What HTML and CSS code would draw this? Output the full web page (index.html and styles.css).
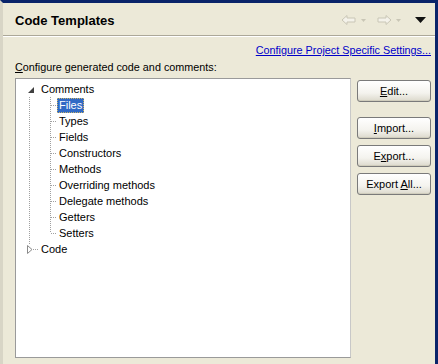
FILE: index.html
```html
<!DOCTYPE html>
<html>
<head>
<meta charset="utf-8">
<link rel="stylesheet" href="styles.css">
</head>
<body>
<div class="window">
  <div class="header">
    <span class="title">Code Templates</span>
    <div class="nav">
      <svg class="navicon" width="16" height="12" viewBox="0 0 16 12"><path d="M1 6 L6 1.5 V4 H14 V8 H6 V10.5 Z" fill="#f4f2ea" stroke="#c9c6b6" stroke-width="1"/></svg>
      <svg class="drop" width="5" height="3" viewBox="0 0 5 3"><path d="M0 0 H5 L2.5 3 Z" fill="#c9c6b6"/></svg>
      <svg class="navicon" width="16" height="12" viewBox="0 0 16 12"><path d="M15 6 L10 1.5 V4 H2 V8 H10 V10.5 Z" fill="#f4f2ea" stroke="#c9c6b6" stroke-width="1"/></svg>
      <svg class="drop" width="5" height="3" viewBox="0 0 5 3"><path d="M0 0 H5 L2.5 3 Z" fill="#c9c6b6"/></svg>
      <svg class="menu" width="11" height="7" viewBox="0 0 11 7"><path d="M0 0 H11 L5.5 6 Z" fill="#111"/></svg>
    </div>
  </div>
  <div class="body">
    <div class="linkrow"><a class="link" href="#">Configure Project Specific Settings...</a></div>
    <div class="label"><u>C</u>onfigure generated code and comments:</div>
    <div class="main">
      <div class="tree">
        <div class="row">
          <span class="cell a exp-open"><svg width="6" height="6" viewBox="0 0 6 6"><path d="M6 0 V6 H0 Z" fill="#404040"/></svg></span>
          <span class="text">Comments</span>
        </div>
        <div class="row"><span class="cell a vl"></span><span class="cell b vl hl"></span><span class="text sel">Files</span></div>
        <div class="row"><span class="cell a vl"></span><span class="cell b vl hl"></span><span class="text">Types</span></div>
        <div class="row"><span class="cell a vl"></span><span class="cell b vl hl"></span><span class="text">Fields</span></div>
        <div class="row"><span class="cell a vl"></span><span class="cell b vl hl"></span><span class="text">Constructors</span></div>
        <div class="row"><span class="cell a vl"></span><span class="cell b vl hl"></span><span class="text">Methods</span></div>
        <div class="row"><span class="cell a vl"></span><span class="cell b vl hl"></span><span class="text">Overriding methods</span></div>
        <div class="row"><span class="cell a vl"></span><span class="cell b vl hl"></span><span class="text">Delegate methods</span></div>
        <div class="row"><span class="cell a vl"></span><span class="cell b vl hl"></span><span class="text">Getters</span></div>
        <div class="row"><span class="cell a vl"></span><span class="cell b vlhalf hl"></span><span class="text">Setters</span></div>
        <div class="row">
          <span class="cell a vltop hla exp-closed"><svg width="6" height="9" viewBox="0 0 6 9"><path d="M0.5 0.5 V8.5 L5 4.5 Z" fill="#fff" stroke="#8a8a8a" stroke-width="1"/></svg></span>
          <span class="text">Code</span>
        </div>
      </div>
      <div class="buttons">
        <button class="btn"><u>E</u>dit...</button>
        <button class="btn gap"><u>I</u>mport...</button>
        <button class="btn">E<u>x</u>port...</button>
        <button class="btn">Export <u>A</u>ll...</button>
      </div>
    </div>
  </div>
</div>
</body>
</html>
```

FILE: styles.css
```css
html, body {
  margin: 0;
  padding: 0;
  background: #ece9d8;
}
body {
  font-family: "Liberation Sans", Arial, sans-serif;
  font-size: 11px;
  color: #000;
}
.window {
  width: 438px;
  height: 364px;
  box-sizing: border-box;
  border-top: 3px solid #0a246a;
  border-left: 3px solid #d8d5c6;
  border-right: 3px solid #0a246a;
  background: #ece9d8;
  display: flex;
  flex-direction: column;
}
.header {
  height: 32px;
  flex: none;
  display: flex;
  align-items: center;
  justify-content: space-between;
  padding: 0 9px 0 12px;
  border-bottom: 1px solid #aca899;
  box-shadow: 0 1px 0 #fff;
}
.title {
  font-weight: bold;
  font-size: 13px;
  font-family: "Liberation Sans", Arial, sans-serif;
  margin-top: 2px;
}
.nav {
  display: flex;
  align-items: center;
  gap: 4px;
  margin-top: 2px;
}
.drop { margin-right: 6px; }
.menu { margin-left: 4px; }
.body {
  flex: 1;
  display: flex;
  flex-direction: column;
  padding: 6px 4px 6px 12px;
}
.linkrow {
  display: flex;
  justify-content: flex-end;
  height: 16px;
  align-items: center;
}
.link {
  color: #0000c8;
  text-decoration: underline;
  font-size: 10.8px;
}
.label {
  height: 16px;
  display: flex;
  align-items: center;
  margin-top: 1px;
  font-size: 10.8px;
}
.label u { text-decoration: underline; }
.main {
  flex: 1;
  display: flex;
  gap: 6px;
  margin-top: 3px;
}
.tree {
  width: 336px;
  height: 280px;
  box-sizing: border-box;
  background: #fff;
  border: 1px solid #9a9a9a;
  border-right-color: #c8c8c8;
  padding: 2px 0 0 4px;
}
.row {
  height: 16px;
  display: flex;
  align-items: center;
}
.cell {
  flex: none;
  height: 16px;
  display: flex;
  align-items: center;
  background-repeat: no-repeat;
}
.cell.a { width: 19px; }
.cell.b { width: 18px; }
.exp-open { padding-left: 8px; box-sizing: border-box; padding-top: 1px; }
.exp-closed { padding-left: 7px; box-sizing: border-box; }
.cell.a.vl {
  background-image: repeating-linear-gradient(to bottom, #a0a0a0 0 1px, transparent 1px 2px);
  background-size: 1px 16px;
  background-position: 9px 0;
}
.cell.b.vl.hl {
  background-image:
    repeating-linear-gradient(to bottom, #a0a0a0 0 1px, transparent 1px 2px),
    repeating-linear-gradient(to right, #a0a0a0 0 1px, transparent 1px 2px);
  background-size: 1px 16px, 6px 1px;
  background-position: 11px 0, 12px 8px;
}
.cell.b.vlhalf.hl {
  background-image:
    repeating-linear-gradient(to bottom, #a0a0a0 0 1px, transparent 1px 2px),
    repeating-linear-gradient(to right, #a0a0a0 0 1px, transparent 1px 2px);
  background-size: 1px 8px, 6px 1px;
  background-position: 11px 0, 12px 8px;
}
.cell.a.vltop.hla {
  background-image:
    repeating-linear-gradient(to bottom, #a0a0a0 0 1px, transparent 1px 2px),
    repeating-linear-gradient(to right, #a0a0a0 0 1px, transparent 1px 2px);
  background-size: 1px 4px, 7px 1px;
  background-position: 9px 0, 13px 8px;
}
.text {
  padding: 0 2px;
  height: 15px;
  line-height: 15px;
  white-space: nowrap;
  box-sizing: border-box;
}
.text.sel {
  background: #316ac5;
  color: #fff;
  outline: 1px dotted #c9b36a;
  outline-offset: -1px;
}
.buttons {
  display: flex;
  flex-direction: column;
  gap: 6px;
  margin-top: 2px;
}
.btn {
  width: 74px;
  height: 22px;
  box-sizing: border-box;
  font-family: "Liberation Sans", Arial, sans-serif;
  font-size: 11px;
  color: #000;
  border: 1px solid #7a7a7a;
  border-radius: 3px;
  background: linear-gradient(to bottom, #ffffff 0%, #f4f3ee 60%, #dcd9cc 100%);
  box-shadow: inset 0 -1px 0 #d0cdbd;
  padding: 0;
}
.btn.gap { margin-top: 9px; }
.btn u { text-decoration: underline; }
```
